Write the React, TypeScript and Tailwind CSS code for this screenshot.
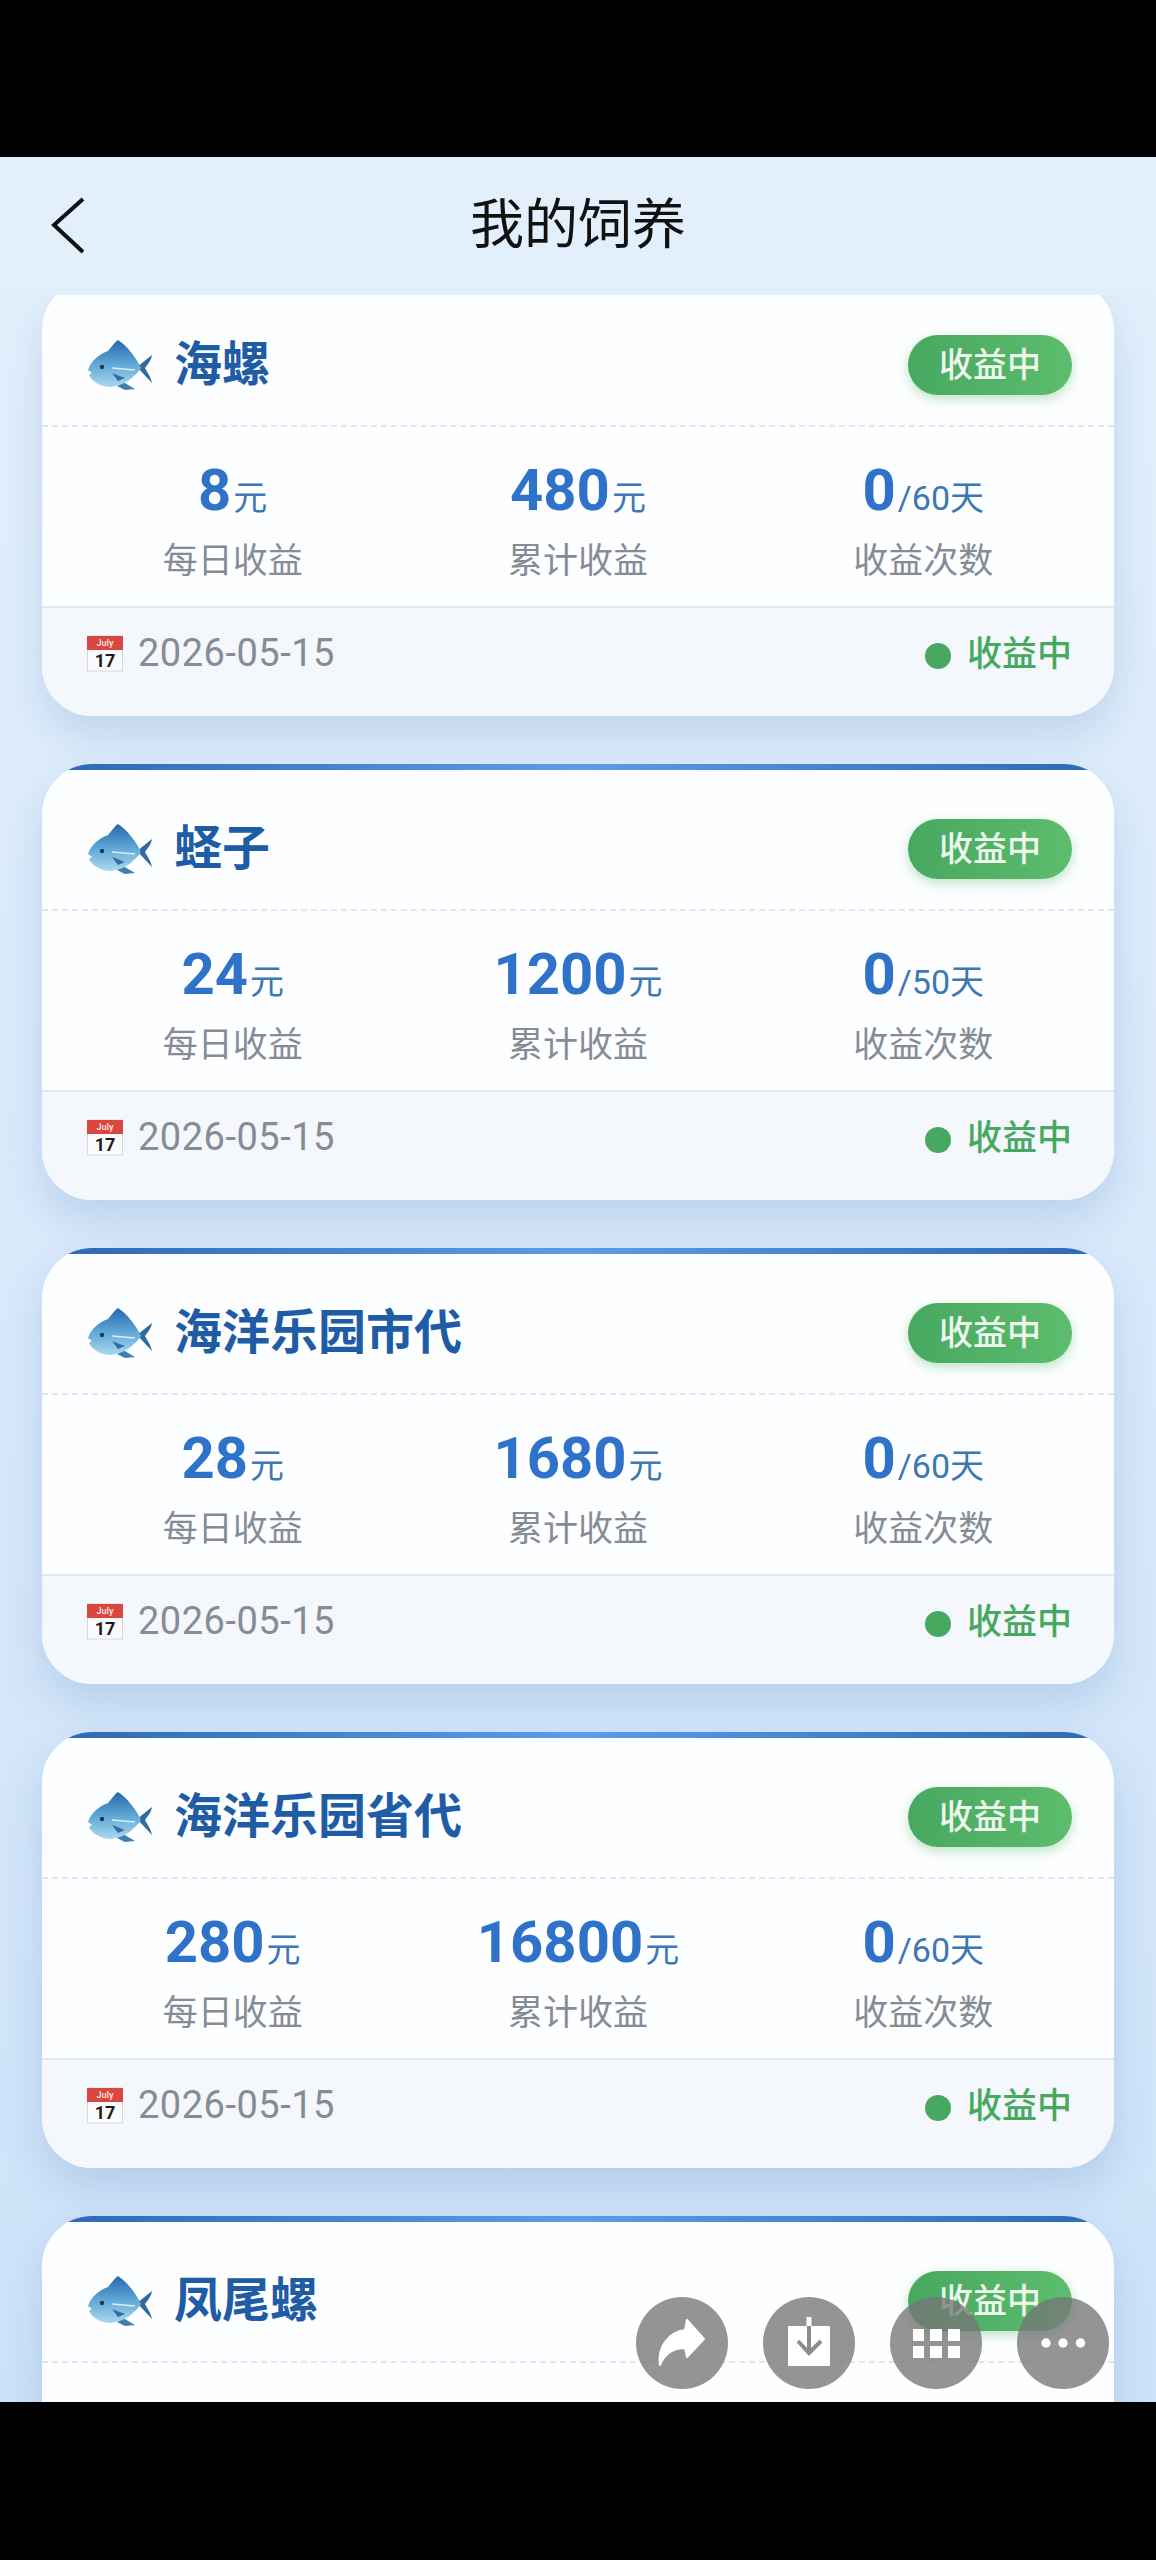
const cjk = "font-['Roboto','Noto_Sans_CJK_SC',sans-serif]";

type Feed = {
  name: string;
  daily?: string;
  total?: string;
  days?: string;
};

const feeds: Feed[] = [
  { name: '海螺', daily: '8', total: '480', days: '60' },
  { name: '蛏子', daily: '24', total: '1200', days: '50' },
  { name: '海洋乐园市代', daily: '28', total: '1680', days: '60' },
  { name: '海洋乐园省代', daily: '280', total: '16800', days: '60' },
  { name: '凤尾螺' }, // cut off by the bottom bar
];

function Fish() {
  return (
    <svg viewBox="0 0 66 50" className="h-[50px] w-[66px] shrink-0">
      <defs>
        <linearGradient id="fishBody" x1="0" y1="0" x2="0" y2="1">
          <stop offset="0" stopColor="#2468aa" />
          <stop offset="0.5" stopColor="#5fa6d6" />
          <stop offset="1" stopColor="#a9d8ef" />
        </linearGradient>
      </defs>
      <path d="M36 42 L48 49 L38 50 L30 46 Z" fill="#3d7fb5" />
      <path d="M50 27 L65 15 C64 21 60 25 58 28 C60 32 64 37 65 43 Z" fill="#2e6c9f" />
      <path
        d="M1 30 C4 20 13 14 21 11 C25 6 28 2 31 0 C40 6 49 17 54 28 C47 38 36 46 24 47 C13 47 5 41 2 35 L5 33 Z"
        fill="url(#fishBody)"
      />
      <circle cx="15" cy="27" r="2.2" fill="#143a5e" />
      <path d="M25 28 L48 30" stroke="#d8eefa" strokeWidth="1.4" fill="none" />
      <path d="M25 33 L38 38 L31 41 Z" fill="#2f6ea6" />
    </svg>
  );
}

function CalendarIcon() {
  return (
    <svg viewBox="0 0 36 37" className="h-[37px] w-9 shrink-0">
      <rect x="0.5" y="1" width="35" height="35" fill="#fbfbfb" stroke="#d5d8dc" />
      <rect x="0" y="1" width="36" height="14" fill="#d9473f" />
      <text x="18" y="11" textAnchor="middle" fontSize="9" fontWeight="700" fill="#ffd9d4" fontFamily="Roboto, sans-serif">
        July
      </text>
      <text x="18" y="32" textAnchor="middle" fontSize="18" fontWeight="700" fill="#1c1c1c" fontFamily="Roboto, sans-serif">
        17
      </text>
    </svg>
  );
}

function Stat({ value, unit, label }: { value?: string; unit: string; label: string }) {
  return (
    <div className="flex flex-col items-center">
      <div className="flex h-[70px] items-baseline">
        <span className="text-[58px] leading-[70px] font-bold text-[#2f72c9]">{value}</span>
        <span className="ml-[2px] text-[34px] leading-[70px] text-[#3d78b4]">{unit}</span>
      </div>
      <span className="mt-[12px] text-[35px] leading-[50px] text-[#868c94]">{label}</span>
    </div>
  );
}

function FeedCard({ feed }: { feed: Feed }) {
  return (
    <section className="h-[436px] shrink-0 overflow-hidden rounded-[50px] bg-[#fdfeff] shadow-[0_20px_40px_rgba(70,120,180,0.2)]">
      <div className="h-[6px] bg-gradient-to-r from-[#2c68b4] via-[#5c9ce8] to-[#2c68b4]" />
      <div className="flex h-[141px] items-center justify-between border-b-2 border-dashed border-[#e0e6ee] pt-[19px] pr-[42px] pl-[45px]">
        <div className="flex items-center gap-[21px]">
          <Fish />
          <h2 className="text-[48px] leading-[60px] font-bold text-[#1f5ca6]">{feed.name}</h2>
        </div>
        <span className="flex h-[60px] w-[164px] items-center justify-center rounded-full bg-gradient-to-r from-[#47a860] to-[#5cbd6e] text-[34px] font-medium text-[#eef8ef] shadow-[0_4px_12px_rgba(70,175,95,0.35)]">
          收益中
        </span>
      </div>
      {feed.daily && (
        <>
          <div className="grid h-[179px] grid-cols-3 px-[18px] pt-[28px]">
            <Stat value={feed.daily} unit="元" label="每日收益" />
            <Stat value={feed.total} unit="元" label="累计收益" />
            <Stat value="0" unit={`/${feed.days}天`} label="收益次数" />
          </div>
          <div className="flex h-[110px] items-center justify-between border-t-2 border-[#e3e9f0] bg-[#f4f7fc] pr-[42px] pb-[18px] pl-[45px]">
            <div className="flex items-center gap-[15px]">
              <CalendarIcon />
              <span className="text-[38px] tracking-[0.5px] text-[#868c94]">2026-05-15</span>
            </div>
            <div className="mt-[5px] flex items-center gap-[16px]">
              <span className="h-[26px] w-[26px] rounded-full bg-[#47a860]" />
              <span className="text-[35px] font-medium text-[#47a860]">收益中</span>
            </div>
          </div>
        </>
      )}
    </section>
  );
}

function RoundButton({ children }: { children: React.ReactNode }) {
  return (
    <button className="h-[92px] w-[92px] rounded-full bg-[rgba(118,118,118,0.78)]">
      <svg viewBox="0 0 92 92" className="h-full w-full" fill="white">
        {children}
      </svg>
    </button>
  );
}

export default function App() {
  return (
    <div className={`relative flex h-[2560px] w-[1156px] flex-col overflow-hidden bg-black ${cjk}`}>
      <div className="h-[157px] shrink-0 bg-black" />
      <div className="flex h-[2245px] shrink-0 flex-col overflow-hidden bg-gradient-to-b from-[#e3f0fc] to-[#cde2f9]">
        <header className="flex h-[138px] shrink-0 items-center">
          <div className="w-[160px] pl-[50px]">
            <svg viewBox="0 0 36 60" className="h-[60px] w-[36px]" fill="none" stroke="#111" strokeWidth="4">
              <path d="M33 3 L4 29 L33 56" />
            </svg>
          </div>
          <h1 className="flex-1 text-center text-[54px] leading-[70px] text-[#111]">我的饲养</h1>
          <div className="w-[160px]" />
        </header>
        <div className="flex-1 overflow-hidden">
          <div className="-mt-[15px] flex flex-col gap-[48px] px-[42px]">
            {feeds.map((feed) => (
              <FeedCard key={feed.name} feed={feed} />
            ))}
          </div>
        </div>
      </div>
      <div className="flex-1 bg-black" />

      <div className="absolute right-[47px] bottom-[171px] flex gap-[35px]">
        <RoundButton>
          <path
            d="M51 23 L68 42 L51 60 L49 51 C39 51 29 56 24 68 C21 50 33 35 49 33 Z"
            stroke="white"
            strokeWidth="2"
            strokeLinejoin="round"
          />
        </RoundButton>
        <RoundButton>
          <rect x="25" y="29" width="42" height="40" rx="1" />
          <rect x="43.5" y="20" width="5" height="10" />
          <path d="M46 29 V55 M35 44 L46 56 L58 44" fill="none" stroke="#8c8c8c" strokeWidth="4" />
        </RoundButton>
        <RoundButton>
          <rect x="23" y="32" width="11" height="12" />
          <rect x="40" y="32" width="12" height="12" />
          <rect x="58" y="32" width="12" height="12" />
          <rect x="23" y="49" width="11" height="12" />
          <rect x="40" y="49" width="12" height="12" />
          <rect x="58" y="49" width="12" height="12" />
        </RoundButton>
        <RoundButton>
          <circle cx="29" cy="46" r="4.7" />
          <circle cx="46" cy="46" r="4.7" />
          <circle cx="63.5" cy="46" r="4.7" />
        </RoundButton>
      </div>
    </div>
  );
}
